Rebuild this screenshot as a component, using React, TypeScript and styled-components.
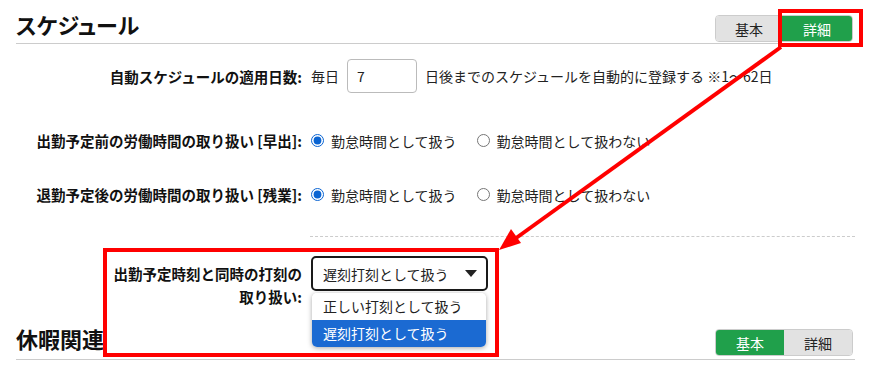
import React from "react";
import styled, {createGlobalStyle} from "styled-components";

const GlobalStyle = createGlobalStyle`
  body {
    margin: 0;
    background: #fff;
    color: #222;
    font-family: "Noto Sans CJK JP", "Noto Sans", sans-serif;
    font-size: 14px;
  }
`;

const Page = styled.div`
  position: relative;
  width: 874px;
  height: 370px;
  padding: 0 19px 0 16px;
  box-sizing: border-box;
  overflow: hidden;
`;

const SectionHeader = styled.div<{ $mt?: number; $pb?: number }>`
  display: flex;
  align-items: flex-end;
  justify-content: space-between;
  height: 43px;
  margin-top: ${p => p.$mt || 0}px;
  padding-bottom: ${p => p.$pb || 0}px;
  border-bottom: 1px solid #ccc;
`;

const Title = styled.h2`
  margin: 0 0 4px;
  font-size: 22px;
  line-height: 30px;
  font-weight: bold;
  color: #111;
  font-feature-settings: "palt";
`;

const ButtonGroup = styled.div`
  display: flex;
  margin: 0 2px 1px 0;
  border: 1px solid #ccc;
  border-radius: 4px;
  overflow: hidden;
`;

const ModeButton = styled.button<{ $active?: boolean; $w: number }>`
  width: ${p => p.$w}px;
  height: 25px;
  border: none;
  padding: 0;
  font-family: inherit;
  font-size: 14px;
  background: ${p => (p.$active ? "#20a04b" : "#e2e2e2")};
  color: ${p => (p.$active ? "#fff" : "#222")};
`;

const Row = styled.div<{ $mt: number; $top?: boolean }>`
  display: grid;
  grid-template-columns: 286px 1fr;
  column-gap: 9px;
  align-items: ${p => (p.$top ? "start" : "center")};
  margin-top: ${p => p.$mt}px;
`;

const Label = styled.div<{ $pt?: number }>`
  text-align: right;
  font-weight: bold;
  font-size: 14.5px;
  line-height: 23px;
  padding-top: ${p => p.$pt || 0}px;
  color: #111;
`;

const Field = styled.div`
  display: flex;
  align-items: center;
  line-height: 20px;
`;

const DaysInput = styled.input`
  width: 70px;
  height: 34px;
  box-sizing: border-box;
  margin: 0 8px 0 8px;
  padding: 0 9px;
  border: 1px solid #bbb;
  border-radius: 4px;
  font-family: inherit;
  font-size: 14px;
  color: #222;
`;

const RadioLabel = styled.label<{ $ml?: number }>`
  display: flex;
  align-items: center;
  gap: 7px;
  margin-left: ${p => p.$ml || 0}px;
`;

const Radio = styled.input`
  width: 13px;
  height: 13px;
  margin: 0;
  accent-color: #0a64d2;
`;

const Divider = styled.div`
  margin: 30px 0 0 294px;
  border-top: 1px dashed #ccc;
`;

const SelectWrap = styled.div`
  position: relative;
  width: 177px;
`;

const SelectBox = styled.div`
  display: flex;
  align-items: center;
  justify-content: space-between;
  height: 35px;
  box-sizing: border-box;
  padding: 0 9px 0 10px;
  border: 2px solid #1a1a1a;
  border-radius: 5px;
  background: #fff;
`;

const Caret = styled.span`
  width: 0;
  height: 0;
  border-left: 6px solid transparent;
  border-right: 6px solid transparent;
  border-top: 7px solid #222;
`;

const OptionList = styled.div`
  position: absolute;
  top: 37px;
  left: 1px;
  width: 174px;
  background: #fff;
  border-radius: 5px;
  box-shadow: 0 1px 5px rgba(0, 0, 0, 0.35);
  overflow: hidden;
  z-index: 2;
`;

const Option = styled.div<{ $selected?: boolean }>`
  height: 27px;
  line-height: 27px;
  padding-left: 11px;
  background: ${p => (p.$selected ? "#1b6ad2" : "#fff")};
  color: ${p => (p.$selected ? "#fff" : "#222")};
`;

const Annotations = styled.svg`
  position: absolute;
  left: 0;
  top: 0;
  pointer-events: none;
  z-index: 5;
`;

const App = () => {
	return (
		<Page>
			<GlobalStyle/>
			<SectionHeader>
				<Title>スケジュール</Title>
				<ButtonGroup>
					<ModeButton $w={66}>基本</ModeButton>
					<ModeButton $w={70} $active>詳細</ModeButton>
				</ButtonGroup>
			</SectionHeader>

			<Row $mt={15}>
				<Label>自動スケジュールの適用日数:</Label>
				<Field>
					毎日
					<DaysInput defaultValue="7"/>
					日後までのスケジュールを自動的に登録する ※1～62日
				</Field>
			</Row>

			<Row $mt={36}>
				<Label>出勤予定前の労働時間の取り扱い [早出]:</Label>
				<Field>
					<RadioLabel><Radio type="radio" name="early" defaultChecked/>勤怠時間として扱う</RadioLabel>
					<RadioLabel $ml={20}><Radio type="radio" name="early"/>勤怠時間として扱わない</RadioLabel>
				</Field>
			</Row>

			<Row $mt={31}>
				<Label>退勤予定後の労働時間の取り扱い [残業]:</Label>
				<Field>
					<RadioLabel><Radio type="radio" name="over" defaultChecked/>勤怠時間として扱う</RadioLabel>
					<RadioLabel $ml={20}><Radio type="radio" name="over"/>勤怠時間として扱わない</RadioLabel>
				</Field>
			</Row>

			<Divider/>

			<Row $mt={19} $top>
				<Label $pt={6}>出勤予定時刻と同時の打刻の<br/>取り扱い:</Label>
				<SelectWrap>
					<SelectBox>
						遅刻打刻として扱う
						<Caret/>
					</SelectBox>
					<OptionList>
						<Option>正しい打刻として扱う</Option>
						<Option $selected>遅刻打刻として扱う</Option>
					</OptionList>
				</SelectWrap>
			</Row>

			<SectionHeader $mt={6} $pb={2}>
				<Title>休暇関連</Title>
				<ButtonGroup>
					<ModeButton $w={68} $active>基本</ModeButton>
					<ModeButton $w={68}>詳細</ModeButton>
				</ButtonGroup>
			</SectionHeader>

			<Annotations width="874" height="370" viewBox="0 0 874 370">
				<rect x="780" y="11" width="81" height="34" fill="none" stroke="#ff0000" strokeWidth="4"/>
				<rect x="105" y="250" width="392" height="105" fill="none" stroke="#ff0000" strokeWidth="4"/>
				<line x1="781" y1="47" x2="512" y2="241" stroke="#ff0000" strokeWidth="4"/>
				<polygon points="499,250 511,229 521,243" fill="#ff0000"/>
			</Annotations>
		</Page>
	);
};

export default App;
